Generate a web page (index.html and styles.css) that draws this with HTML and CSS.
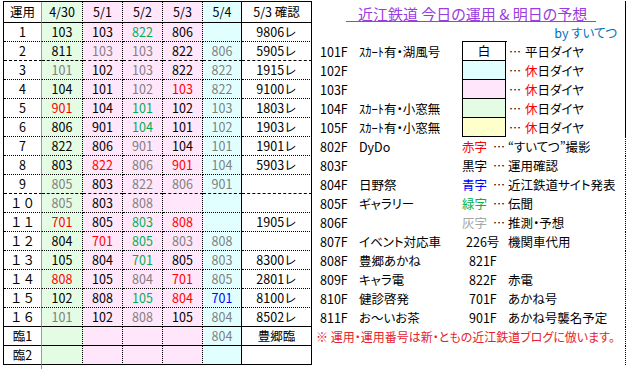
FILE: index.html
```html
<!DOCTYPE html>
<html lang="ja">
<head>
<meta charset="utf-8">
<title>近江鉄道 今日の運用 & 明日の予想</title>
<link rel="stylesheet" href="styles.css">
</head>
<body>
<div class="sheet">
  <div class="ops">
    <div class="r hd"><div class="c">運用</div><div class="c">4/30</div><div class="c">5/1</div><div class="c">5/2</div><div class="c">5/3</div><div class="c">5/4</div><div class="c">5/3 確認</div></div>
    <div class="r"><div class="c">1</div><div class="c">103</div><div class="c">103</div><div class="c gn">822</div><div class="c">806</div><div class="c"></div><div class="c">9806レ</div></div>
    <div class="r ds"><div class="c">2</div><div class="c">811</div><div class="c x">103</div><div class="c x">103</div><div class="c">822</div><div class="c x">806</div><div class="c">5905レ</div></div>
    <div class="r"><div class="c">3</div><div class="c x">101</div><div class="c">102</div><div class="c x">103</div><div class="c">822</div><div class="c x">822</div><div class="c">1915レ</div></div>
    <div class="r"><div class="c">4</div><div class="c">104</div><div class="c">101</div><div class="c x">102</div><div class="c rd">103</div><div class="c x">822</div><div class="c">9100レ</div></div>
    <div class="r"><div class="c">5</div><div class="c rd">901</div><div class="c">104</div><div class="c gn">101</div><div class="c">102</div><div class="c x">103</div><div class="c">1803レ</div></div>
    <div class="r"><div class="c">6</div><div class="c">806</div><div class="c">901</div><div class="c gn">104</div><div class="c">101</div><div class="c x">102</div><div class="c">1903レ</div></div>
    <div class="r"><div class="c">7</div><div class="c">822</div><div class="c">806</div><div class="c x">901</div><div class="c">104</div><div class="c x">101</div><div class="c">1901レ</div></div>
    <div class="r"><div class="c">8</div><div class="c">803</div><div class="c rd">822</div><div class="c x">806</div><div class="c rd">901</div><div class="c x">104</div><div class="c">5903レ</div></div>
    <div class="r ds"><div class="c">9</div><div class="c x">805</div><div class="c">803</div><div class="c x">822</div><div class="c x">806</div><div class="c x">901</div><div class="c"></div></div>
    <div class="r"><div class="c">１０</div><div class="c x">805</div><div class="c">803</div><div class="c x">808</div><div class="c"></div><div class="c"></div><div class="c"></div></div>
    <div class="r"><div class="c">１１</div><div class="c rd">701</div><div class="c">805</div><div class="c gn">803</div><div class="c rd">808</div><div class="c"></div><div class="c">1905レ</div></div>
    <div class="r"><div class="c">１２</div><div class="c">804</div><div class="c rd">701</div><div class="c gn">805</div><div class="c x">803</div><div class="c x">808</div><div class="c"></div></div>
    <div class="r"><div class="c">１３</div><div class="c">105</div><div class="c">804</div><div class="c gn">701</div><div class="c">805</div><div class="c x">803</div><div class="c">8300レ</div></div>
    <div class="r"><div class="c">１４</div><div class="c rd">808</div><div class="c">105</div><div class="c x">804</div><div class="c rd">701</div><div class="c x">805</div><div class="c">2801レ</div></div>
    <div class="r"><div class="c">１５</div><div class="c">102</div><div class="c">808</div><div class="c gn">105</div><div class="c rd">804</div><div class="c bu">701</div><div class="c">8100レ</div></div>
    <div class="r sl"><div class="c">１６</div><div class="c x">101</div><div class="c">102</div><div class="c x">808</div><div class="c">105</div><div class="c x">804</div><div class="c">8502レ</div></div>
    <div class="r sl"><div class="c">臨1</div><div class="c"></div><div class="c"></div><div class="c"></div><div class="c"></div><div class="c x">804</div><div class="c">豊郷臨</div></div>
    <div class="r sl"><div class="c">臨2</div><div class="c"></div><div class="c"></div><div class="c"></div><div class="c"></div><div class="c"></div><div class="c"></div></div>
  </div>

  <div class="info">
    <div class="title-row"><span class="title">近江鉄道 今日の運用 &amp; 明日の予想</span></div>

    <div class="i"></div><div class="i"></div><div class="i box-top"></div><div class="i by">by すいてつ</div>

    <div class="i code">101F</div><div class="i desc">ｽｶｰﾄ有・湖風号</div><div class="i box white">白</div><div class="i note"><span class="dots">⋯</span>平日ダイヤ</div>
    <div class="i code">102F</div><div class="i desc"></div><div class="i box cyan"></div><div class="i note"><span class="dots">⋯</span><span class="rd">休</span>日ダイヤ</div>
    <div class="i code">103F</div><div class="i desc"></div><div class="i box pink"></div><div class="i note"><span class="dots">⋯</span><span class="rd">休</span>日ダイヤ</div>
    <div class="i code">104F</div><div class="i desc">ｽｶｰﾄ有・小窓無</div><div class="i box green"></div><div class="i note"><span class="dots">⋯</span><span class="rd">休</span>日ダイヤ</div>
    <div class="i code">105F</div><div class="i desc">ｽｶｰﾄ有・小窓無</div><div class="i box yellow"></div><div class="i note"><span class="dots">⋯</span><span class="rd">休</span>日ダイヤ</div>

    <div class="i code">802F</div><div class="i desc">DyDo</div><div class="i key"><span class="rd">赤字</span><span class="dots">⋯</span></div><div class="i note2">“すいてつ”撮影</div>
    <div class="i code">803F</div><div class="i desc"></div><div class="i key"><span>黒字</span><span class="dots">⋯</span></div><div class="i note2">運用確認</div>
    <div class="i code">804F</div><div class="i desc">日野祭</div><div class="i key"><span class="bu">青字</span><span class="dots">⋯</span></div><div class="i note2">近江鉄道サイト発表</div>
    <div class="i code">805F</div><div class="i desc">ギャラリー</div><div class="i key"><span class="gn">緑字</span><span class="dots">⋯</span></div><div class="i note2">伝聞</div>
    <div class="i code">806F</div><div class="i desc"></div><div class="i key"><span class="lg">灰字</span><span class="dots">⋯</span></div><div class="i note2">推測・予想</div>

    <div class="i code">807F</div><div class="i desc">イベント対応車</div><div class="i sub num">226号</div><div class="i note2">機関車代用</div>
    <div class="i code">808F</div><div class="i desc">豊郷あかね</div><div class="i sub">821F</div><div class="i note2"></div>
    <div class="i code">809F</div><div class="i desc">キャラ電</div><div class="i sub">822F</div><div class="i note2">赤電</div>
    <div class="i code">810F</div><div class="i desc">健診啓発</div><div class="i sub">701F</div><div class="i note2">あかね号</div>
    <div class="i code">811F</div><div class="i desc">お～いお茶</div><div class="i sub">901F</div><div class="i note2">あかね号襲名予定</div>

    <div class="remark">※ 運用・運用番号は新・ともの近江鉄道ブログに倣います。</div>
    <div class="blank"></div>
  </div>
</div>
</body>
</html>
```

FILE: styles.css
```css
* { box-sizing: border-box; }
html, body { margin: 0; padding: 0; background: #fff; }
body {
  font-family: "Noto Sans CJK JP", "Noto Sans", sans-serif;
  font-size: 12.5px;
  font-feature-settings: "palt";
  color: #000;
  width: 632px;
  height: 369px;
  overflow: hidden;
}
.sheet {
  display: flex;
  align-items: flex-start;
  padding: 1px 0 0 3px;
}

/* ---------- operations table ---------- */
.ops {
  display: grid;
  grid-template-columns: 38px 41px 40px 40px 40px 39px 70px;
  grid-template-rows: 21px repeat(18, 19px);
  border-left: 1px solid #000;
  border-top: 1px solid #000;
  position: relative;
}
.r { display: contents; }
.c {
  display: flex;
  align-items: center;
  justify-content: center;
  line-height: 1;
  border-bottom: 1px dotted #000;
  border-right: 1px dotted #000;
  white-space: nowrap;
  padding-top: 1px;
  font-feature-settings: normal;
}
.r > .c:nth-child(1) { border-right: 1px solid #9a9a9a; background: #fff; }
.r > .c:nth-child(2) { background: #e4fbe4; }
.r > .c:nth-child(3),
.r > .c:nth-child(4),
.r > .c:nth-child(5) { background: #ffe6fa; }
.r > .c:nth-child(6) { background: #e2ffff; border-right: 1px solid #000; }
.r > .c:nth-child(7) { border-right: 1px solid #000; background: #fff; }
.r.hd > .c { border-bottom: 1px solid #000; }
.r.ds > .c { border-bottom: 1px dashed #000; }
.r.sl > .c { border-bottom: 1px solid #000; }

/* frozen-pane divider continues below the table */
.ops::after {
  content: "";
  position: absolute;
  left: 37px;
  top: 100%;
  width: 1px;
  height: 6px;
  background: #9a9a9a;
}

.x { color: #808080; }
.gn { color: #00b050; }
.rd { color: #ff0000; }
.bu { color: #0000ff; }
.lg { color: #a6a6a6; }

/* ---------- info panel ---------- */
.info {
  display: grid;
  grid-template-columns: 46px 104px 45px 119px;
  grid-template-rows: 22px repeat(18, 19px);
  width: 315px;
}
.title-row {
  grid-column: 1 / -1;
  display: flex;
  align-items: flex-end;
  padding: 0 0 1px 34px;
  border-right: 1px solid #000;
}
.title {
  font-size: 15px;
  line-height: 15px;
  color: #9a3ce0;
  padding: 0 9px 0 12px;
  border-bottom: 1px solid #9a3ce0;
  white-space: nowrap;
}
.i {
  display: flex;
  align-items: center;
  white-space: nowrap;
  line-height: 1;
  padding-top: 1px;
}
.by {
  justify-content: flex-end;
  padding-right: 8px;
  color: #0070c0;
  border-right: 1px solid #000;
}
.box-top { border-bottom: 1px solid #000; }
.code { padding-left: 8px; }
.desc { padding-left: 1px; }
.box {
  justify-content: center;
  border-left: 1px solid #000;
  border-right: 1px solid #000;
  border-bottom: 1px solid #000;
  margin-right: 1px;
}
.white { background: #fff; }
.cyan { background: #e2ffff; }
.pink { background: #ffe6fa; }
.green { background: #e4fbe4; }
.yellow { background: #ffffcc; }
.note {
  padding-left: 2px;
  border-right: 1px solid #000;
}
.note .dots { margin-right: 4px; }
.note2 {
  padding-left: 1px;
  border-right: 1px dotted #000;
}
.key { gap: 6px; }
.dots { display: inline-block; font-size: 12px; }
.sub { padding-left: 7px; }
.sub.num { padding-left: 4px; }
.remark {
  grid-column: 1 / -1;
  display: flex;
  align-items: center;
  padding: 1px 0 0 4px;
  color: #e8212e;
  white-space: nowrap;
  line-height: 1;
  font-size: 12px;
  border-right: 1px dotted #000;
}
.blank {
  grid-column: 1 / -1;
  border-right: 1px dotted #000;
}
```
